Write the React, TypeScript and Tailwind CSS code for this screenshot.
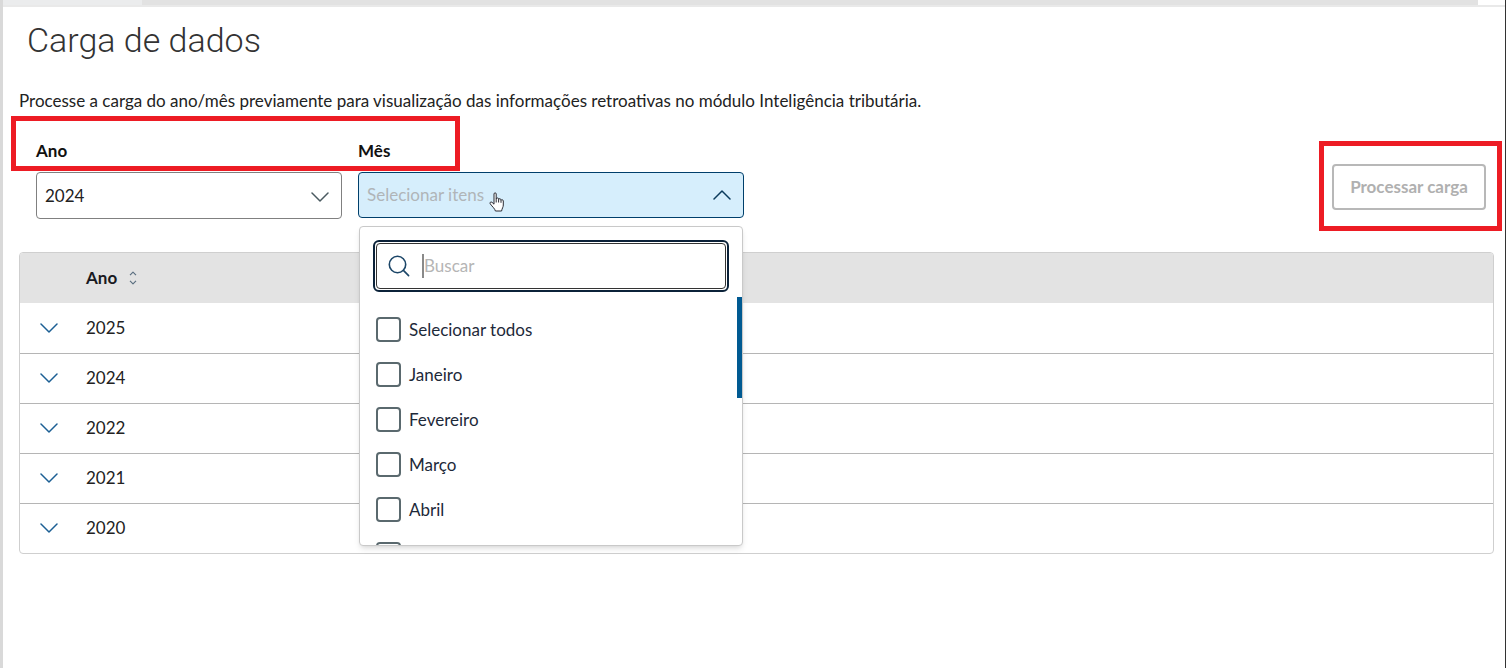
import { useState } from "react";

const years = ["2025", "2024", "2022", "2021", "2020"];

const months = [
  "Janeiro",
  "Fevereiro",
  "Março",
  "Abril",
  "Maio",
  "Junho",
  "Julho",
  "Agosto",
  "Setembro",
  "Outubro",
  "Novembro",
  "Dezembro",
];

function Chevron({ up = false, className = "" }: { up?: boolean; className?: string }) {
  return (
    <svg width="18" height="10" viewBox="0 0 18 10" fill="none" stroke="currentColor" strokeWidth="1.5" className={className} aria-hidden="true">
      <path d={up ? "M1 9 L9 1 L17 9" : "M1 1 L9 9 L17 1"} strokeLinecap="round" strokeLinejoin="round" />
    </svg>
  );
}

function SortIcon() {
  return (
    <svg width="8" height="14" viewBox="0 0 8 14" fill="none" stroke="#5b6f80" strokeWidth="1.2" aria-hidden="true">
      <path d="M1 4.2 L4 1.2 L7 4.2 M1 9.8 L4 12.8 L7 9.8" strokeLinejoin="round" />
    </svg>
  );
}

function HandPointer() {
  return (
    <svg width="16" height="20" viewBox="0 0 16 20" className="absolute left-[131px] top-5 pointer-events-none" aria-hidden="true">
      <path
        d="M5 12.2 V2 C5 .4 7.2 .4 7.2 2 V7 C7.2 5.6 9.6 5.6 9.6 7 V7.6 C9.8 6.3 12 6.4 12 7.9 V8.4 C12.3 7.4 14.3 7.5 14.3 9 V13 C14.3 15.4 13 16.2 12.6 19 H6.4 C5.8 16.6 3.6 15 1.2 11.8 C.4 10.6 1.8 9.4 3 10.3 Z"
        fill="#fff"
        stroke="#2b2b33"
        strokeWidth="1"
        strokeLinejoin="round"
      />
      <path d="M7.2 7 V10.5 M9.6 7.5 V10.5 M12 8.4 V10.8" stroke="#2b2b33" strokeWidth="1" />
    </svg>
  );
}

function MonthOption({ label, checked, onChange }: { label: string; checked: boolean; onChange: () => void }) {
  return (
    <label className="flex items-center gap-2 h-[45px] shrink-0 pl-4 text-[#1d2939]">
      <input
        type="checkbox"
        checked={checked}
        onChange={onChange}
        className="appearance-none size-[25px] rounded border-2 border-[#5a696e] bg-white checked:bg-[#005a92]"
      />
      {label}
    </label>
  );
}

function MonthMenu() {
  const [selected, setSelected] = useState<string[]>([]);
  const allSelected = selected.length === months.length;

  const toggle = (month: string) => {
    setSelected((prev) => (prev.includes(month) ? prev.filter((m) => m !== month) : [...prev, month]));
  };

  return (
    <div className="absolute left-px right-px top-[54px] z-10 h-80 flex flex-col overflow-hidden bg-white border border-[#c9c9c9] rounded shadow-md">
      <div className="px-[13px] pt-[13px]">
        <div className="rounded-md border-2 border-[#0b2239] p-px">
          <div className="flex items-center gap-3 h-[46px] rounded border border-[#333] pl-[11px]">
            <svg width="22" height="22" viewBox="0 0 22 22" fill="none" stroke="#1c4668" strokeWidth="1.6" aria-hidden="true">
              <circle cx="9.5" cy="9.5" r="8.2" />
              <path d="M15.4 15.4 L20.6 20.6" strokeLinecap="round" />
            </svg>
            <div className="flex flex-1 border-l-2 border-[#8a8a8a]">
              <input type="text" aria-label="Buscar" placeholder="Buscar" className="w-full outline-none placeholder:text-[#b5b5b5]" />
            </div>
          </div>
        </div>
      </div>
      <div className="flex flex-1 min-h-0 mt-[5px]">
        <div className="flex flex-col flex-1 pt-[10px] overflow-y-auto [scrollbar-width:none]">
          <MonthOption label="Selecionar todos" checked={allSelected} onChange={() => setSelected(allSelected ? [] : months)} />
          {months.map((month) => (
            <MonthOption key={month} label={month} checked={selected.includes(month)} onChange={() => toggle(month)} />
          ))}
        </div>
        <div className="w-[5px] h-[101px] bg-[#005a92]" />
      </div>
    </div>
  );
}

export default function App() {
  const [year, setYear] = useState("2024");
  const [open, setOpen] = useState(true);

  return (
    <div className="min-h-screen flex flex-col bg-white border-l-[3px] border-l-[#d9d9d9] border-r border-r-[#333] font-[Lato,sans-serif] text-[17px] leading-6 text-[#222]">
      <div className="flex h-[7px] border-b-2 border-[#e9e9e9]">
        <div className="w-[139px] bg-[#ebeced]" />
        <div className="flex-1 bg-[#e2e2e2]" />
        <div className="w-[27px] bg-white" />
      </div>

      <main className="pl-4 pr-[11px]">
        <h1 className="pl-2 pt-2 text-[34px] leading-[50px] font-[Roboto,sans-serif] font-light text-[#333]">Carga de dados</h1>
        <p className="pt-6">
          Processe a carga do ano/mês previamente para visualização das informações retroativas no módulo Inteligência tributária.
        </p>

        <div className="relative flex items-start gap-4 pl-[17px] pt-[26px]">
          <div className="absolute -left-2 top-[3px] w-[449px] h-[55px] border-[5px] border-[#ed1c24] pointer-events-none" />

          <div className="w-[306px]">
            <label htmlFor="ano" className="block h-[33px] font-bold text-[#111]">Ano</label>
            <div className="relative">
              <select
                id="ano"
                value={year}
                onChange={(e) => setYear(e.target.value)}
                className="appearance-none w-full h-[47px] pl-2 rounded border border-[#808080] bg-white"
              >
                {years.map((y) => (
                  <option key={y}>{y}</option>
                ))}
              </select>
              <Chevron className="absolute right-[13px] top-5 pointer-events-none text-[#4a5a60]" />
            </div>
          </div>

          <div className="w-[386px]">
            <label htmlFor="mes" className="block h-[33px] font-bold text-[#111]">Mês</label>
            <div className="relative">
              <button
                id="mes"
                type="button"
                aria-haspopup="listbox"
                aria-expanded={open}
                onClick={() => setOpen(!open)}
                className="flex items-center justify-between w-full h-[46px] pl-2 pr-3 rounded border border-[#003f6b] bg-[#d6eefc] text-[#b0b5b8]"
              >
                Selecionar itens
                <Chevron up={open} className="text-[#0b3b5c]" />
              </button>
              <HandPointer />
              {open && <MonthMenu />}
            </div>
          </div>

          <div className="relative ml-auto mr-2 mt-[25px]">
            <button type="button" disabled className="h-[46px] w-[154px] rounded border-2 border-[#b8b8b8] font-bold text-[#b0b0b0]">
              Processar carga
            </button>
            <div className="absolute -left-[13px] -right-4 -top-[23px] -bottom-[21px] border-[5px] border-[#ed1c24] pointer-events-none" />
          </div>
        </div>

        <div className="mt-[33px] rounded border border-[#cfcfcf] overflow-hidden">
          <table className="w-full border-collapse text-left">
            <thead>
              <tr className="h-[50px] bg-[#e3e3e3]">
                <th className="w-[66px]" aria-label="Expandir" />
                <th className="font-bold text-[#1a1a22]">
                  <span className="flex items-center gap-3">
                    Ano
                    <SortIcon />
                  </span>
                </th>
              </tr>
            </thead>
            <tbody>
              {years.map((y) => (
                <tr key={y} className="h-[50px] border-b border-[#b5b5b5] last:border-b-0">
                  <td className="pl-5">
                    <button type="button" aria-label={`Expandir ${y}`} className="block text-[#1c5f94]">
                      <Chevron />
                    </button>
                  </td>
                  <td>{y}</td>
                </tr>
              ))}
            </tbody>
          </table>
        </div>
      </main>
    </div>
  );
}
